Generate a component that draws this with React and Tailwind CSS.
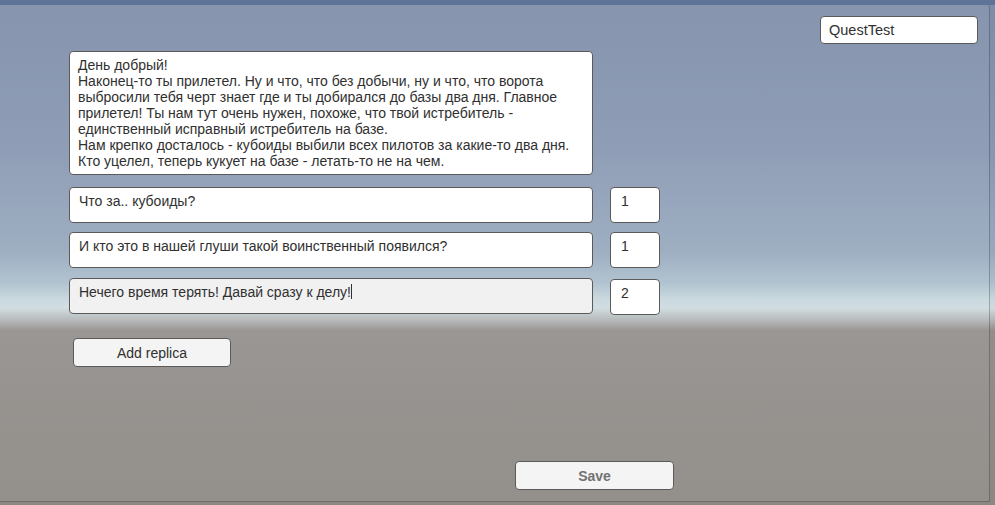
import React from "react"

const lines = [
  "День добрый!",
  "Наконец-то ты прилетел. Ну и что, что без добычи, ну и что, что ворота",
  "выбросили тебя черт знает где и ты добирался до базы два дня. Главное",
  "прилетел! Ты нам тут очень нужен, похоже, что твой истребитель -",
  "единственный исправный истребитель на базе.",
  "Нам крепко досталось - кубоиды выбили всех пилотов за какие-то два дня.",
  "Кто уцелел, теперь кукует на базе - летать-то не на чем.",
]

const replicas = [
  { text: "Что за.. кубоиды?", next: "1" },
  { text: "И кто это в нашей глуши такой воинственный появился?", next: "1" },
  { text: "Нечего время терять! Давай сразу к делу!", next: "2", focused: true },
]

const ReplicaRow = ({ replica, extra }) => (
  <div className={`flex items-start ${extra ? "mt-[1px]" : ""}`}>
    <div
      className={`w-[524px] h-[36px] rounded-[4px] border border-[#5a5a5a] px-[9px] pt-[5px] leading-[16px] ${
        replica.focused ? "bg-[#f1f1f1]" : "bg-white"
      }`}
    >
      {replica.text}
      {replica.focused && <span className="inline-block w-px h-[15px] bg-[#333] align-[-2px]" />}
    </div>
    <div
      className={`ml-[17px] w-[50px] h-[36px] rounded-[4px] border border-[#5a5a5a] bg-white px-[10px] pt-[5px] leading-[16px] ${
        extra ? "mt-[1px]" : ""
      }`}
    >
      {replica.next}
    </div>
  </div>
)

export default function App() {
  return (
    <div
      className="w-[995px] h-[505px] flex flex-col overflow-hidden text-[14px] text-[#303030] bg-[linear-gradient(to_bottom,#7d8ca8_0%,#8797b1_30%,#98a9be_50%,#acbfcd_56%,#c8d8de_59.5%,#cedbdf_61%,#b0b3b4_63.5%,#928e8b_65.5%,#8b8783_100%)]"
      style={{ fontFamily: '"Liberation Sans", Arial, sans-serif' }}
    >
      <div className="h-[5px] shrink-0 bg-[#5e7398]" />
      <div className="flex flex-1">
        <div className="w-[990px] h-[497px] flex flex-col bg-white/[0.07] border-r border-b border-black/25 rounded-tr-[3px]">
          <div className="flex justify-end pt-[11px] pr-[11px]">
            <div className="w-[158px] h-[28px] rounded-[4px] border border-[#5a5a5a] bg-white pl-[8px] pt-[5px] text-[14.5px] leading-[16px]">
              QuestTest
            </div>
          </div>

          <div className="pl-[69px] pt-[7px] flex flex-col">
            <div className="w-[524px] h-[124px] rounded-[4px] border border-[#5a5a5a] bg-white pl-[8px] pt-[5px] leading-[16px] whitespace-nowrap">
              {lines.map((line) => (
                <div key={line}>{line}</div>
              ))}
            </div>

            <div className="mt-[12px] flex flex-col gap-[9px]">
              {replicas.map((replica, i) => (
                <ReplicaRow key={replica.text} replica={replica} extra={i === 2} />
              ))}
            </div>

            <button className="mt-[23px] ml-[4px] w-[158px] h-[29px] rounded-[4px] border border-[#5a5a5a] bg-[#f4f4f4] text-[14px] text-[#303030] leading-[16px]">
              Add replica
            </button>
          </div>

          <div className="mt-auto mb-[11px] pl-[515px]">
            <button className="w-[159px] h-[29px] rounded-[4px] border border-[#5a5a5a] bg-[#f4f4f4] text-[14px] font-bold text-[#727272] leading-[16px]">
              Save
            </button>
          </div>
        </div>
      </div>
    </div>
  )
}
